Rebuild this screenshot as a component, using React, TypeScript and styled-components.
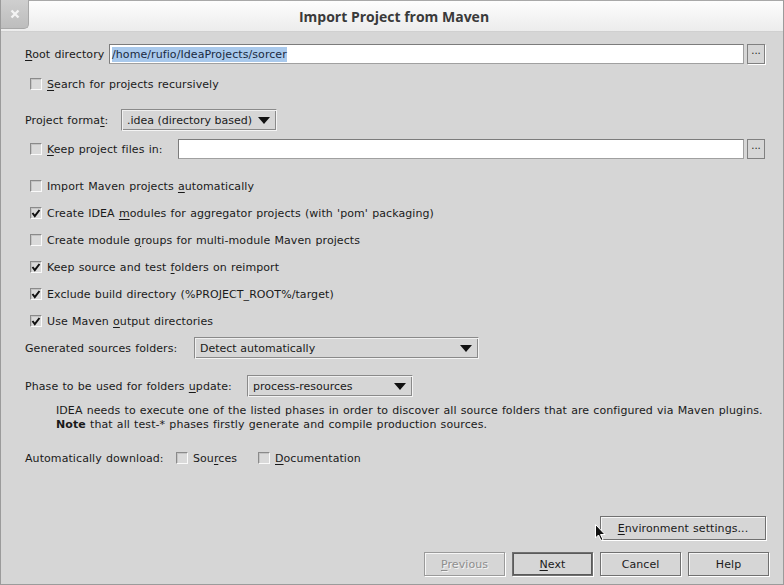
import React from "react";
import styled, { createGlobalStyle } from "styled-components";

const Global = createGlobalStyle`
  html, body { margin: 0; padding: 0; background: #d6d6d6; }
  body { font-family: "DejaVu Sans", sans-serif; font-size: 11px; color: #1a1a1a; }
  * { box-sizing: border-box; }
`;

const Window = styled.div`
  width: 784px;
  height: 585px;
  display: flex;
  flex-direction: column;
  border: 1px solid #9b9b9b;
  border-top: none;
  background: #d6d6d6;
  position: relative;
  overflow: hidden;
`;

const TitleBar = styled.div`
  height: 32px;
  flex: none;
  display: flex;
  align-items: center;
  background: linear-gradient(#fdfdfd, #ececec);
  border-top: 1px solid #a8a8a8;
  border-bottom: 1px solid #d0d0d0;
  position: relative;
`;

const CloseBox = styled.div`
  width: 28px;
  height: 29px;
  margin-top: -1px;
  background: linear-gradient(#cfcfcf, #bdbdbd);
  border-right: 1px solid #a8a8a8;
  border-bottom: 1px solid #a8a8a8;
  border-bottom-right-radius: 5px;
  display: flex;
  align-items: center;
  justify-content: center;
  align-self: flex-start;
`;

const Title = styled.div`
  flex: 1;
  text-align: center;
  font-family: "Open Sans", "DejaVu Sans", sans-serif;
  font-weight: 700;
  font-size: 14px;
  color: #3a3a3a;
  margin-right: 28px;
  padding-left: 4px;
`;

const Body = styled.div`
  flex: 1;
  display: flex;
  flex-direction: column;
  padding: 0 17px 8px 24px;
  letter-spacing: 0.08px;
  word-spacing: 0.6px;
`;

const Row = styled.div<{ $top: number; $h?: number }>`
  display: flex;
  align-items: center;
  margin-top: ${(p) => p.$top}px;
  height: ${(p) => p.$h ?? 20}px;
  flex: none;
`;

const Label = styled.span<{ $w?: number }>`
  white-space: pre;
  ${(p) => (p.$w ? `width: ${p.$w}px; flex: none;` : "")}
`;

const U = styled.span`
  text-decoration: underline;
  text-underline-offset: 2px;
`;

const Field = styled.div`
  flex: 1;
  height: 20px;
  background: #fff;
  border: 1px solid #7c7c7c;
  border-right-color: #a0a0a0;
  border-bottom-color: #a0a0a0;
  display: flex;
  align-items: center;
  padding-left: 2px;
`;

const Selected = styled.span`
  background: #a9c9ec;
  color: #1a2a40;
  padding: 1px 0;
`;

const Browse = styled.div<{ $focus?: boolean }>`
  width: 18px;
  height: 20px;
  margin-left: 3px;
  margin-right: 1px;
  flex: none;
  border: 1px solid #808080;
  box-shadow: ${(p) => (p.$focus ? "1px 1px 0 #fff" : "none")};
  display: flex;
  align-items: flex-start;
  justify-content: center;
  font-size: 10px;
  line-height: 12px;
  letter-spacing: 0;
  color: #222;
`;

const CheckRow = styled(Row)`
  padding-left: 5px;
`;

const Box = styled.span`
  width: 12px;
  height: 12px;
  flex: none;
  border: 1px solid #8a8a8a;
  border-right-color: #fafafa;
  border-bottom-color: #fafafa;
  background: #dadada;
  box-shadow: inset 1px 1px 0 #c4c4c4;
  display: inline-flex;
  align-items: center;
  justify-content: center;
  margin-right: 5px;
`;

const Combo = styled.div<{ $w: number }>`
  width: ${(p) => p.$w}px;
  height: 22px;
  flex: none;
  border: 1px solid #8a8a8a;
  border-right-color: #f4f4f4;
  border-bottom-color: #f4f4f4;
  box-shadow: inset 1px 1px 0 #f0f0f0, inset -1px -1px 0 #8a8a8a;
  display: flex;
  align-items: center;
  justify-content: space-between;
  padding: 0 6px 0 5px;
  letter-spacing: 0;
  word-spacing: 0;
`;

const Arrow = styled.span`
  width: 0;
  height: 0;
  border-left: 6px solid transparent;
  border-right: 6px solid transparent;
  border-top: 7px solid #111;
`;

const Note = styled.div`
  margin-top: 7px;
  padding-left: 31px;
  line-height: 14px;
  white-space: nowrap;
  flex: none;
`;

const Spacer = styled.div`
  flex: 1;
`;

const ButtonRow = styled.div<{ $top?: number; $right?: number }>`
  display: flex;
  justify-content: flex-end;
  gap: 7px;
  margin-top: ${(p) => p.$top ?? 0}px;
  margin-right: ${(p) => p.$right ?? 0}px;
  flex: none;
`;

const Button = styled.div<{ $w?: number; $def?: boolean; $dis?: boolean }>`
  width: ${(p) => p.$w ?? 81}px;
  height: 24px;
  border: 1px solid ${(p) => (p.$dis ? "#9a9a9a" : "#707070")};
  box-shadow: ${(p) =>
    p.$def
      ? "inset 1px 1px 0 #5a5a5a, inset -1px -1px 0 #5a5a5a, 1px 1px 0 #fff"
      : "inset 1px 1px 0 #f6f6f6, 1px 1px 0 #fff"};
  display: flex;
  align-items: center;
  justify-content: center;
  color: ${(p) => (p.$dis ? "#8e8e8e" : "#1a1a1a")};
  ${(p) => (p.$dis ? "text-shadow: 1px 1px 0 #f4f4f4;" : "")}
`;

const Cursor = styled.svg`
  position: absolute;
  left: 594px;
  top: 524px;
`;

const Check = () => (
  <svg width="10" height="10" viewBox="0 0 10 10">
    <path d="M1.5 5 L3.8 8 L8.5 2" stroke="#111" strokeWidth="2" fill="none" />
  </svg>
);

const CB = ({ on }: { on?: boolean }) => <Box>{on ? <Check /> : null}</Box>;

export default function App() {
  return (
    <>
      <Global />
      <Window>
        <TitleBar>
          <CloseBox>
            <svg width="10" height="10" viewBox="0 0 10 10">
              <path d="M1.5 1.5 L8.5 8.5 M8.5 1.5 L1.5 8.5" stroke="#f4f4f4" strokeWidth="2.4" />
            </svg>
          </CloseBox>
          <Title>Import Project from Maven</Title>
        </TitleBar>
        <Body>
          <Row $top={12}>
            <Label $w={84}>
              <U>R</U>oot directory
            </Label>
            <Field>
              <Selected>/home/rufio/IdeaProjects/sorcer</Selected>
            </Field>
            <Browse $focus>...</Browse>
          </Row>
          <CheckRow $top={10}>
            <CB />
            <Label>
              <U>S</U>earch for projects recursively
            </Label>
          </CheckRow>
          <Row $top={15} $h={22}>
            <Label $w={96}>
              Project forma<U>t</U>:
            </Label>
            <Combo $w={156}>
              <span>.idea (directory based)</span>
              <Arrow />
            </Combo>
          </Row>
          <CheckRow $top={8}>
            <CB />
            <Label $w={131}>
              <U>K</U>eep project files in:
            </Label>
            <Field />
            <Browse>...</Browse>
          </CheckRow>
          <CheckRow $top={17}>
            <CB />
            <Label>
              Import Maven projects <U>a</U>utomatically
            </Label>
          </CheckRow>
          <CheckRow $top={7}>
            <CB on />
            <Label>
              Create IDEA <U>m</U>odules for aggregator projects (with 'pom' packaging)
            </Label>
          </CheckRow>
          <CheckRow $top={7}>
            <CB />
            <Label>
              Create module <U>g</U>roups for multi-module Maven projects
            </Label>
          </CheckRow>
          <CheckRow $top={7}>
            <CB on />
            <Label>
              Keep source and test <U>f</U>olders on reimport
            </Label>
          </CheckRow>
          <CheckRow $top={7}>
            <CB on />
            <Label>Exclude build directory (%PROJECT_ROOT%/target)</Label>
          </CheckRow>
          <CheckRow $top={7}>
            <CB on />
            <Label>
              Use Maven <U>o</U>utput directories
            </Label>
          </CheckRow>
          <Row $top={6} $h={22}>
            <Label $w={169}>Generated sources folders:</Label>
            <Combo $w={285}>
              <span>Detect automatically</span>
              <Arrow />
            </Combo>
          </Row>
          <Row $top={16} $h={22}>
            <Label $w={222}>
              Phase to be used for folders <U>u</U>pdate:
            </Label>
            <Combo $w={166}>
              <span>process-resources</span>
              <Arrow />
            </Combo>
          </Row>
          <Note>
            IDEA needs to execute one of the listed phases in order to discover all source folders that are
            configured via Maven plugins.
            <br />
            <b>Note</b> that all test-* phases firstly generate and compile production sources.
          </Note>
          <Row $top={16}>
            <Label $w={151}>Automatically download:</Label>
            <Box />
            <Label $w={65}>
              Sou<U>r</U>ces
            </Label>
            <Box />
            <Label>
              <U>D</U>ocumentation
            </Label>
          </Row>
          <Spacer />
          <ButtonRow>
            <Button $w={166}>
              <span>
                <U>E</U>nvironment settings...
              </span>
            </Button>
          </ButtonRow>
          <ButtonRow $top={12} $right={-3}>
            <Button $dis>
              <span>
                <U>P</U>revious
              </span>
            </Button>
            <Button $def>
              <span>
                <U>N</U>ext
              </span>
            </Button>
            <Button>Cancel</Button>
            <Button>Help</Button>
          </ButtonRow>
        </Body>
        <Cursor width="12" height="18" viewBox="0 0 12 18">
          <path d="M0.5 0.5 L0.5 14 L3.5 11 L6 16.5 L8 15.5 L5.5 10.5 L10 10.5 Z" fill="#111" stroke="#fff" strokeWidth="1" />
        </Cursor>
      </Window>
    </>
  );
}
